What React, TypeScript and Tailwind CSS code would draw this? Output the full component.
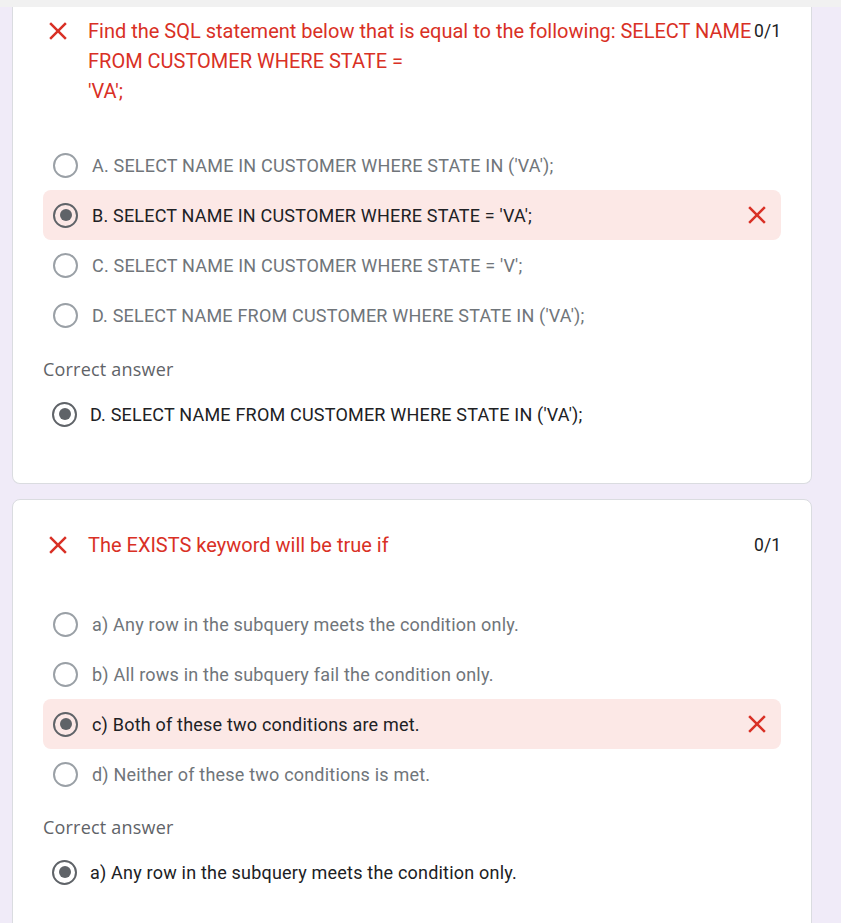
import React from "react";

const XIcon = ({ className = "" }: { className?: string }) => (
  <svg viewBox="0 0 24 24" width="30" height="30" className={className} fill="#d93025">
    <path d="M19 6.41L17.59 5 12 10.59 6.41 5 5 6.41 10.59 12 5 17.59 6.41 19 12 13.41 17.59 19 19 17.59 13.41 12z" />
  </svg>
);

const Radio = ({ checked }: { checked: boolean }) =>
  checked ? (
    <div className="w-[25px] h-[25px] rounded-full border-[2.5px] border-[#5f6368] flex items-center justify-center shrink-0">
      <div className="w-[12px] h-[12px] rounded-full bg-[#5f6368]" />
    </div>
  ) : (
    <div className="w-[25px] h-[25px] rounded-full border-[2.5px] border-[#9aa0a6] shrink-0" />
  );

type Opt = { text: string; wrong?: boolean };

const Option = ({ o }: { o: Opt }) => (
  <div
    className={
      "h-[50px] flex items-center pl-[10px] pr-[9px] rounded-lg " +
      (o.wrong ? "bg-[#fce8e6]" : "")
    }
  >
    <Radio checked={!!o.wrong} />
    <span
      className={
        "ml-[14px] text-[18px] tracking-[0.2px] " + (o.wrong ? "text-[#202124]" : "text-[#70757a]")
      }
    >
      {o.text}
    </span>
    {o.wrong && <XIcon className="ml-auto" />}
  </div>
);

const CorrectBlock = ({ text }: { text: string }) => (
  <div>
    <div
      className="h-[24px] leading-[24px] text-[18px] tracking-[0.2px] text-[#5f6368]"
      style={{ fontFamily: '"Open Sans", Roboto, sans-serif' }}
    >
      Correct answer
    </div>
    <div className="h-[50px] mt-[8px] flex items-center pl-[9px]">
      <Radio checked />
      <span className="ml-[13px] text-[18px] tracking-[0.2px] text-[#202124]">{text}</span>
    </div>
  </div>
);

export default function App() {
  const q1: Opt[] = [
    { text: "A. SELECT NAME IN CUSTOMER WHERE STATE IN ('VA');" },
    { text: "B. SELECT NAME IN CUSTOMER WHERE STATE = 'VA';", wrong: true },
    { text: "C. SELECT NAME IN CUSTOMER WHERE STATE = 'V';" },
    { text: "D. SELECT NAME FROM CUSTOMER WHERE STATE IN ('VA');" },
  ];
  const q2: Opt[] = [
    { text: "a) Any row in the subquery meets the condition only." },
    { text: "b) All rows in the subquery fail the condition only." },
    { text: "c) Both of these two conditions are met.", wrong: true },
    { text: "d) Neither of these two conditions is met." },
  ];
  return (
    <div
      className="min-h-[923px] bg-[#f0ebf8] overflow-hidden"
      style={{ fontFamily: "Roboto, 'Liberation Sans', sans-serif" }}
    >
      <div className="h-[7px] bg-[#f1f1f1]" />
      <div className="ml-[12px] w-[800px] bg-white border-x border-b border-[#dadce0] rounded-b-lg px-[30px] pt-[9px] pb-[44px]">
        <div className="flex items-start">
          <XIcon className="shrink-0" />
          <div className="ml-[15px] w-[664px] text-[20px] leading-[30px] text-[#d93025]">
            Find the SQL statement below that is equal to the following: SELECT NAME FROM CUSTOMER WHERE STATE =
            <br />
            'VA';
          </div>
          <div className="ml-auto text-[17.5px] leading-[30px] text-[#202124]">0/1</div>
        </div>
        <div className="mt-[34px]">
          {q1.map((o, i) => (
            <Option key={i} o={o} />
          ))}
        </div>
        <div className="mt-[17px]">
          <CorrectBlock text="D. SELECT NAME FROM CUSTOMER WHERE STATE IN ('VA');" />
        </div>
      </div>
      <div className="ml-[12px] mt-[15px] w-[800px] bg-white border border-[#dadce0] rounded-lg px-[30px] pt-[30px] pb-[60px]">
        <div className="flex items-start">
          <XIcon className="shrink-0" />
          <div className="ml-[15px] text-[20px] leading-[30px] text-[#d93025]">
            The EXISTS keyword will be true if
          </div>
          <div className="ml-auto text-[17.5px] leading-[30px] text-[#202124]">0/1</div>
        </div>
        <div className="mt-[39px]">
          {q2.map((o, i) => (
            <Option key={i} o={o} />
          ))}
        </div>
        <div className="mt-[16px]">
          <CorrectBlock text="a) Any row in the subquery meets the condition only." />
        </div>
      </div>
    </div>
  );
}
